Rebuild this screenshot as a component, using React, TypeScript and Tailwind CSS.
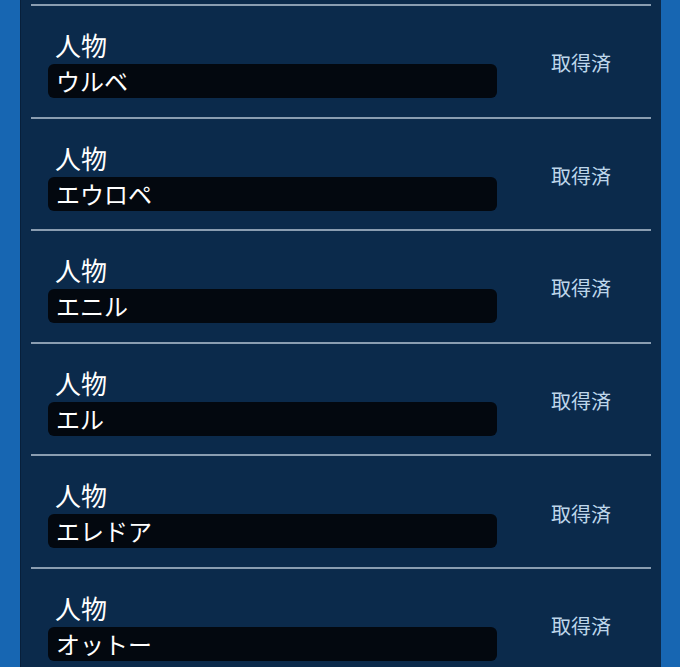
import React from "react";

const names = ["ウルベ", "エウロペ", "エニル", "エル", "エレドア", "オットー"];

function Row({ name }: { name: string }) {
  return (
    <div className="h-[112.6px] shrink-0 border-t-2 border-[#8a9db1] flex items-start">
      <div className="flex-1 flex flex-col pl-[17px] pt-[24px]">
        <div className="text-[26px] leading-[30px] text-white pl-[7px]">人物</div>
        <div className="mt-[4px] w-[449px] h-[34px] rounded-[6px] bg-[#03080f] flex items-center pl-[8px] text-[24px] text-white leading-[34px]">
          {name}
        </div>
      </div>
      <div className="w-[100px] self-stretch flex items-center pt-[4px] text-[20px] text-[#bed6ea]">
        取得済
      </div>
    </div>
  );
}

export default function App() {
  return (
    <div
      className="w-[680px] h-[667px] overflow-hidden flex bg-[#1766b2]"
      style={{ fontFamily: '"Noto Sans CJK JP", "Noto Sans", sans-serif' }}
    >
      <div className="w-[20px] shrink-0" />
      <div className="w-[641px] shrink-0 bg-[#0b2a4b] border-l border-[#081f3a] pt-[4px] pl-[10px] pr-[10px] flex flex-col overflow-hidden">
        {names.map((n) => (
          <Row key={n} name={n} />
        ))}
      </div>
      <div className="flex-1" />
    </div>
  );
}
